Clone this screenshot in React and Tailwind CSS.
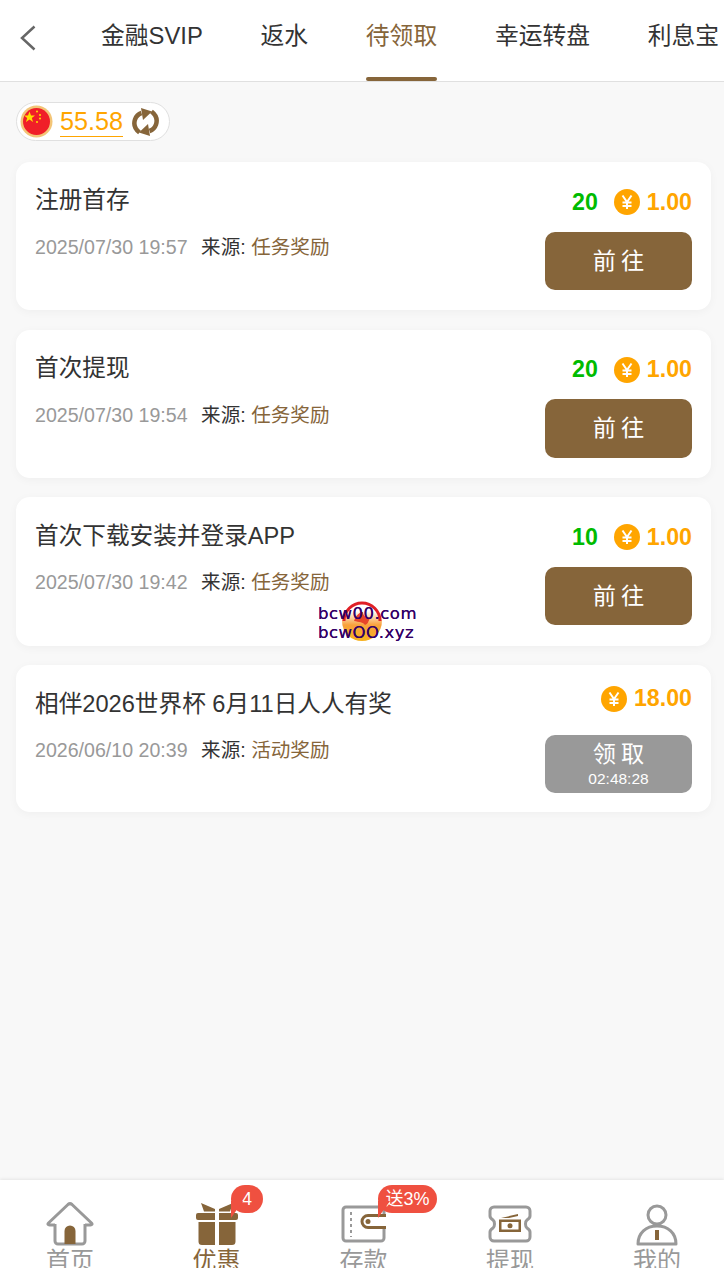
const font = { fontFamily: '"Liberation Sans", "Noto Sans CJK SC", sans-serif' };

const tabs = [
  { label: "金融SVIP" },
  { label: "返水" },
  { label: "待领取", active: true },
  { label: "幸运转盘" },
  { label: "利息宝" },
];

const items = [
  { title: "注册首存", time: "2025/07/30 19:57", source: "任务奖励", points: "20", money: "1.00" },
  { title: "首次提现", time: "2025/07/30 19:54", source: "任务奖励", points: "20", money: "1.00" },
  { title: "首次下载安装并登录APP", time: "2025/07/30 19:42", source: "任务奖励", points: "10", money: "1.00" },
  { title: "相伴2026世界杯 6月11日人人有奖", time: "2026/06/10 20:39", source: "活动奖励", money: "18.00", countdown: "02:48:28" },
];

function Coin() {
  return (
    <svg width="26" height="26" viewBox="0 0 26 26">
      <circle cx="13" cy="13" r="13" fill="#ffa500" />
      <path d="M8.500 6.500 13 13l4.500-6.500M8.500 13.500h9M8.500 17h9M13 13v7" fill="none" stroke="#fff" strokeWidth="2" />
    </svg>
  );
}

function Flag() {
  return (
    <svg width="33" height="33" viewBox="0 0 33 33">
      <circle cx="16.500" cy="16.500" r="16" fill="#f3c577" />
      <circle cx="16.500" cy="16.500" r="13.500" fill="#f01f28" />
      <polygon points="9.500,6.500 11,10.400 15,10.400 11.800,12.900 13,17 9.500,14.600 6,17 7.200,12.900 4,10.400 8,10.400" fill="#ffde00" />
      <circle cx="17" cy="6.500" r="1" fill="#ffde00" />
      <circle cx="20" cy="10" r="1" fill="#ffde00" />
      <circle cx="20" cy="13.500" r="1" fill="#ffde00" />
      <circle cx="17" cy="17" r="1" fill="#ffde00" />
    </svg>
  );
}

function Refresh() {
  return (
    <svg width="27" height="28" viewBox="0 0 27 28" fill="#86653a">
      <path d="M7.500 24.500C3 21 1.500 16 3 11.500 4.200 8 6.500 6 9.500 5" fill="none" stroke="#86653a" strokeWidth="4.500" />
      <path d="M9 0 20 3.500 11 12Z" />
      <path d="M19.500 3.500C24 7 25.500 12 24 16.500 22.800 20 20.500 22 17.500 23" fill="none" stroke="#86653a" strokeWidth="4.500" />
      <path d="M18 28 7 24.500 16 16Z" />
    </svg>
  );
}

function HomeIcon() {
  return (
    <svg width="48" height="44" viewBox="0 0 48 44">
      <path d="M9 22v17a3 3 0 0 0 3 3h24a3 3 0 0 0 3-3V22M9 23H3.500c-1.500 0-2-1-1-2L22 2.500c1.200-1 2.800-1 4 0L45.500 21c1 1 .5 2-1 2H39" fill="none" stroke="#999" strokeWidth="3" strokeLinejoin="round" />
      <path d="M18.500 42V29a5.500 5.500 0 0 1 11 0v13Z" fill="#86653a" />
    </svg>
  );
}

function GiftIcon() {
  return (
    <svg width="44" height="44" viewBox="0 0 44 44" fill="#86653a">
      <path d="M6 1 20 7v2.500H9ZM38 1 24 7v2.500h11Z" />
      <path d="M1 13a2 2 0 0 1 2-2h17v7H3a2 2 0 0 1-2-2ZM24 11h17a2 2 0 0 1 2 2v3a2 2 0 0 1-2 2H24Z" />
      <path d="M3.500 20H20v23H7a3.500 3.500 0 0 1-3.500-3.500ZM24 20h16.500v19.500A3.500 3.500 0 0 1 37 43H24Z" />
    </svg>
  );
}

function WalletIcon() {
  return (
    <svg width="46" height="38" viewBox="0 0 46 38" className="mb-[3px]">
      <path d="M43 9V5a3 3 0 0 0-3-3H5a3 3 0 0 0-3 3v28a3 3 0 0 0 3 3h35a3 3 0 0 0 3-3v-9" fill="none" stroke="#999" strokeWidth="3" />
      <path d="M10 7v25" stroke="#999" strokeWidth="2" strokeDasharray="3 3" />
      <path d="M45 10.500H27a6 6 0 0 0 0 12h18" fill="none" stroke="#86653a" strokeWidth="3" />
      <circle cx="27" cy="16.500" r="2.500" fill="#86653a" />
    </svg>
  );
}

function TicketIcon() {
  return (
    <svg width="46" height="38" viewBox="0 0 46 38" className="mb-[3px]">
      <path d="M7 2h32a4 4 0 0 1 4 4v5c0 2-1.500 3-3 4-2 1.500-2 6.500 0 8 1.500 1 3 2 3 4v5a4 4 0 0 1-4 4H7a4 4 0 0 1-4-4v-5c0-2 1.500-3 3-4 2-1.500 2-6.500 0-8-1.500-1-3-2-3-4V6a4 4 0 0 1 4-4Z" fill="none" stroke="#999" strokeWidth="3" />
      <path d="m14 13 17-4v2l-9 2ZM12 14.500h22V27H12Z" fill="#86653a" />
      <rect x="14.500" y="17" width="17" height="7.500" fill="#fff" />
      <circle cx="23" cy="20.700" r="2.500" fill="#86653a" />
    </svg>
  );
}

function UserIcon() {
  return (
    <svg width="42" height="42" viewBox="0 0 42 42">
      <circle cx="21" cy="11" r="9" fill="none" stroke="#999" strokeWidth="3" />
      <path d="M2 40c0-11 8-18 19-18s19 7 19 18Z" fill="none" stroke="#999" strokeWidth="3" strokeLinejoin="round" />
      <rect x="19" y="26" width="4" height="10" fill="#86653a" />
    </svg>
  );
}

function WatermarkLogo() {
  return (
    <svg width="40" height="40" viewBox="0 0 40 40">
      <defs>
        <linearGradient id="logoFill" x1="0" y1="0" x2="0" y2="1">
          <stop offset="0.25" stopColor="#ffffff" />
          <stop offset="0.6" stopColor="#f9a13c" />
          <stop offset="1" stopColor="#f7b21e" />
        </linearGradient>
      </defs>
      <circle cx="20" cy="20" r="20" fill="url(#logoFill)" />
      <path d="M2 20A18 18 0 0 1 38 20" fill="none" stroke="#e01f26" strokeWidth="3" />
      <path d="M12 20c2-6 6-9 9-9 0 4 3 5 7 6-2 4-2 6-5 7-2-3-6-3-11-4Z" fill="#e8452a" />
    </svg>
  );
}

const nav = [
  { label: "首页", icon: <HomeIcon />, w: "w-[140px]" },
  { label: "优惠", icon: <GiftIcon />, active: true, w: "w-[153px]" },
  { label: "存款", icon: <WalletIcon />, w: "w-[141px]" },
  { label: "提现", icon: <TicketIcon />, w: "w-[152px]" },
  { label: "我的", icon: <UserIcon />, w: "w-[142px]" },
];

function Badge({ className, children }) {
  return (
    <div className={`absolute top-[1185px] flex h-[28px] items-center justify-center rounded-full bg-[#ef5040] text-[18px] text-white ${className}`}>
      {children}
      <div className="absolute left-0 top-[16px] h-0 w-0 border-r-[12px] border-t-[17px] border-r-transparent border-t-[#ef5040]" />
    </div>
  );
}

function Card({ item }) {
  return (
    <div className={`${item.countdown ? "h-[147.3px]" : "h-[148.4px]"} flex justify-between rounded-[14px] bg-white px-[19px] shadow-[0_2px_10px_rgba(0,0,0,0.04)]`}>
      <div className={item.countdown ? "pt-[22.400px]" : "pt-[21.400px]"}>
        <div className="text-[23.65px] leading-[34px] text-[#333]">{item.title}</div>
        <div className={`${item.countdown ? "mt-[14.600px]" : "mt-[15.600px]"} flex text-[19.6px] leading-[28px]`}>
          <span className="text-[#999]">{item.time}</span>
          <span className="ml-[13.500px] text-[#333]">来源:</span>
          <span className="ml-[5.500px] text-[#86653a]">{item.source}</span>
        </div>
      </div>
      <div className={`flex flex-col items-end ${item.countdown ? "pt-[21px]" : "pt-[27px]"}`}>
        <div className="flex h-[26px] items-center text-[23.2px] font-bold">
          {item.points && <span className="mr-[16px] text-[#00bb00]">{item.points}</span>}
          <Coin />
          <span className="ml-[7px] text-[#ffa500]">{item.money}</span>
        </div>
        {item.countdown ? (
          <div className="mt-[22.800px] flex h-[58.5px] w-[147px] flex-col items-center justify-center rounded-[10px] bg-[#999] text-white">
            <span className="pl-[5px] text-[23.2px] leading-[31px] tracking-[5px]">领取</span>
            <span className="text-[15.5px] leading-[18px]">{item.countdown}</span>
          </div>
        ) : (
          <div className="mt-[16.800px] flex h-[58.5px] w-[147px] items-center justify-center rounded-[10px] bg-[#86653a] pl-[5px] text-[23.2px] tracking-[5px] text-white">
            前往
          </div>
        )}
      </div>
    </div>
  );
}

export default function App() {
  return (
    <div className="relative flex h-[1268px] w-[724px] flex-col overflow-hidden bg-[#f8f8f8]" style={font}>
      <header className="flex h-[82px] shrink-0 border-b border-[#e0e0e0] bg-white">
        <div className="flex w-[101px] shrink-0 items-start pl-[19px] pt-[25px]">
          <svg width="18" height="26" viewBox="0 0 18 26">
            <path d="M15.500 1.500 3 13l12.500 11.500" fill="none" stroke="#666" strokeWidth="2.500" />
          </svg>
        </div>
        <div className="flex gap-[57.700px] whitespace-nowrap">
          {tabs.map((t) => (
            <div key={t.label} className={`relative pt-[19px] text-[23.8px] leading-[34px] ${t.active ? "text-[#86653a]" : "text-[#333]"}`}>
              {t.label}
              {t.active && <div className="absolute bottom-0 left-0 h-[4px] w-full rounded-[2px] bg-[#86653a]" />}
            </div>
          ))}
        </div>
      </header>

      <main className="flex-1 pl-[16px] pr-[13px] pt-[20px]">
        <div className="flex h-[39px] w-[154px] items-center rounded-full border border-[#e0e0e0] bg-white pl-[3px]">
          <Flag />
          <span className="ml-[7px] border-b border-[#ffa500] text-[25.2px] leading-[29px] text-[#ffa500]">55.58</span>
          <span className="ml-[9px] flex"><Refresh /></span>
        </div>
        <div className="mt-[21px] flex flex-col gap-[19.200px]">
          {items.map((item) => (
            <Card key={item.title} item={item} />
          ))}
        </div>
      </main>

      <nav className="flex h-[88px] shrink-0 bg-white shadow-[0_-1px_3px_rgba(0,0,0,0.08)]">
        {nav.map((n) => (
          <div key={n.label} className={`${n.w} flex shrink-0 flex-col items-center overflow-hidden`}>
            <div className="flex h-[66px] shrink-0 items-end">
              {n.icon}
            </div>
            <span className={`text-[24px] leading-[30px] ${n.active ? "text-[#86653a]" : "text-[#999]"}`}>{n.label}</span>
          </div>
        ))}
      </nav>

      {/* badges and watermark sit over the page */}
      <Badge className="left-[231px] w-[32px]">4</Badge>
      <Badge className="left-[378px] w-[59px]">送3%</Badge>

      <div className="absolute left-[342px] top-[601px] flex">
        <WatermarkLogo />
      </div>
      <div className="absolute left-[318px] top-[605px] text-[16.5px] leading-[18.500px] tracking-[0.5px] text-[#330066] [text-shadow:0_0_0.6px_#330066]" style={{ fontFamily: '"DejaVu Sans", sans-serif' }}>
        <div>bcw00.com</div>
        <div>bcwOO.xyz</div>
      </div>
    </div>
  );
}
